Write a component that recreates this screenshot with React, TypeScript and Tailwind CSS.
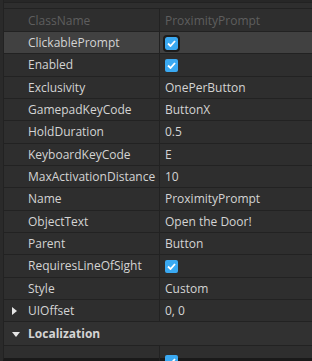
import { type ReactNode } from "react";

type Prop = {
  name: string;
  value?: string;
  check?: boolean;
  hover?: boolean;
  expand?: boolean;
};

const props: Prop[] = [
  { name: "ClickablePrompt", check: true, hover: true },
  { name: "Enabled", check: true },
  { name: "Exclusivity", value: "OnePerButton" },
  { name: "GamepadKeyCode", value: "ButtonX" },
  { name: "HoldDuration", value: "0.5" },
  { name: "KeyboardKeyCode", value: "E" },
  { name: "MaxActivationDistance", value: "10" },
  { name: "Name", value: "ProximityPrompt" },
  { name: "ObjectText", value: "Open the Door!" },
  { name: "Parent", value: "Button" },
  { name: "RequiresLineOfSight", check: true },
  { name: "Style", value: "Custom" },
  { name: "UIOffset", value: "0, 0", expand: true },
];

const CheckBox = ({ ring }: { ring?: boolean }) => (
  <div
    className={`flex h-[13px] w-[13px] items-center justify-center rounded-[2px] bg-[#3aa9f2] ${
      ring ? "outline outline-2 outline-[#1c1c1c]" : ""
    }`}
  >
    <svg width="9" height="7" viewBox="0 0 9 7">
      <path d="M1 3.5 L3.5 6 L8 1" fill="none" stroke="white" strokeWidth="1.8" />
    </svg>
  </div>
);

const Row = ({
  name,
  children,
  hover,
  icon,
  dim,
  h = "h-[22.33px]",
}: {
  name: string;
  children?: ReactNode;
  hover?: boolean;
  icon?: ReactNode;
  dim?: boolean;
  h?: string;
}) => (
  <div
    className={`flex shrink-0 border-b border-[#222222] ${h} ${
      hover ? "bg-[#414141]" : ""
    }`}
  >
    <div className="relative flex w-[156px] items-center border-r border-[#222222] pl-[24px] pt-[1px]">
      {icon}
      <span className={dim ? "text-[#5e5e5e]" : "text-[#d4d4d4]"}>{name}</span>
    </div>
    <div className="flex flex-1 items-center pl-[5px] pt-[1px]">{children}</div>
  </div>
);

const App = () => {
  return (
    <div
      className="flex h-[361px] w-[312px] overflow-hidden bg-[#2e2e2e] text-[12px] leading-none"
      style={{ fontFamily: '"Open Sans", sans-serif' }}
    >
      <div className="w-[3px] shrink-0 bg-[#2a2a2a]" />
      <div className="flex flex-1 flex-col border-l border-[#222222] border-b-[3px] border-b-[#1a1a1a]">
        <div className="h-[3px] shrink-0 border-b border-[#222222] bg-[#272727]" />
        <div className="h-[6px] shrink-0 border-b border-[#222222]" />
        <Row name="ClassName" dim h="h-[23px]">
          <span className="text-[#5e5e5e]">ProximityPrompt</span>
        </Row>
        {props.map((p) => (
          <Row
            key={p.name}
            name={p.name}
            hover={p.hover}
            icon={
              p.expand ? (
                <svg className="absolute left-[8px]" width="5" height="8" viewBox="0 0 5 8">
                  <path d="M0 0 L5 4 L0 8 Z" fill="#e6e6e6" />
                </svg>
              ) : null
            }
          >
            {p.check ? (
              <CheckBox ring={p.hover} />
            ) : (
              <span className="text-[#d4d4d4]">{p.value}</span>
            )}
          </Row>
        ))}
        <div className="relative flex h-[24px] shrink-0 items-center border-b border-[#222222] bg-[#313131] pl-[24px] pt-[1px]">
          <svg className="absolute left-[8px]" width="8" height="5" viewBox="0 0 8 5">
            <path d="M0 0 L8 0 L4 5 Z" fill="#e6e6e6" />
          </svg>
          <span className="font-bold text-[#d4d4d4]">Localization</span>
        </div>
        <div className="flex h-[22px] shrink-0">
          <div className="w-[156px] border-r border-[#222222]" />
          <div className="flex flex-1 items-start pl-[5px] pt-[9px]">
            <CheckBox />
          </div>
        </div>
      </div>
    </div>
  );
};

export default App;
